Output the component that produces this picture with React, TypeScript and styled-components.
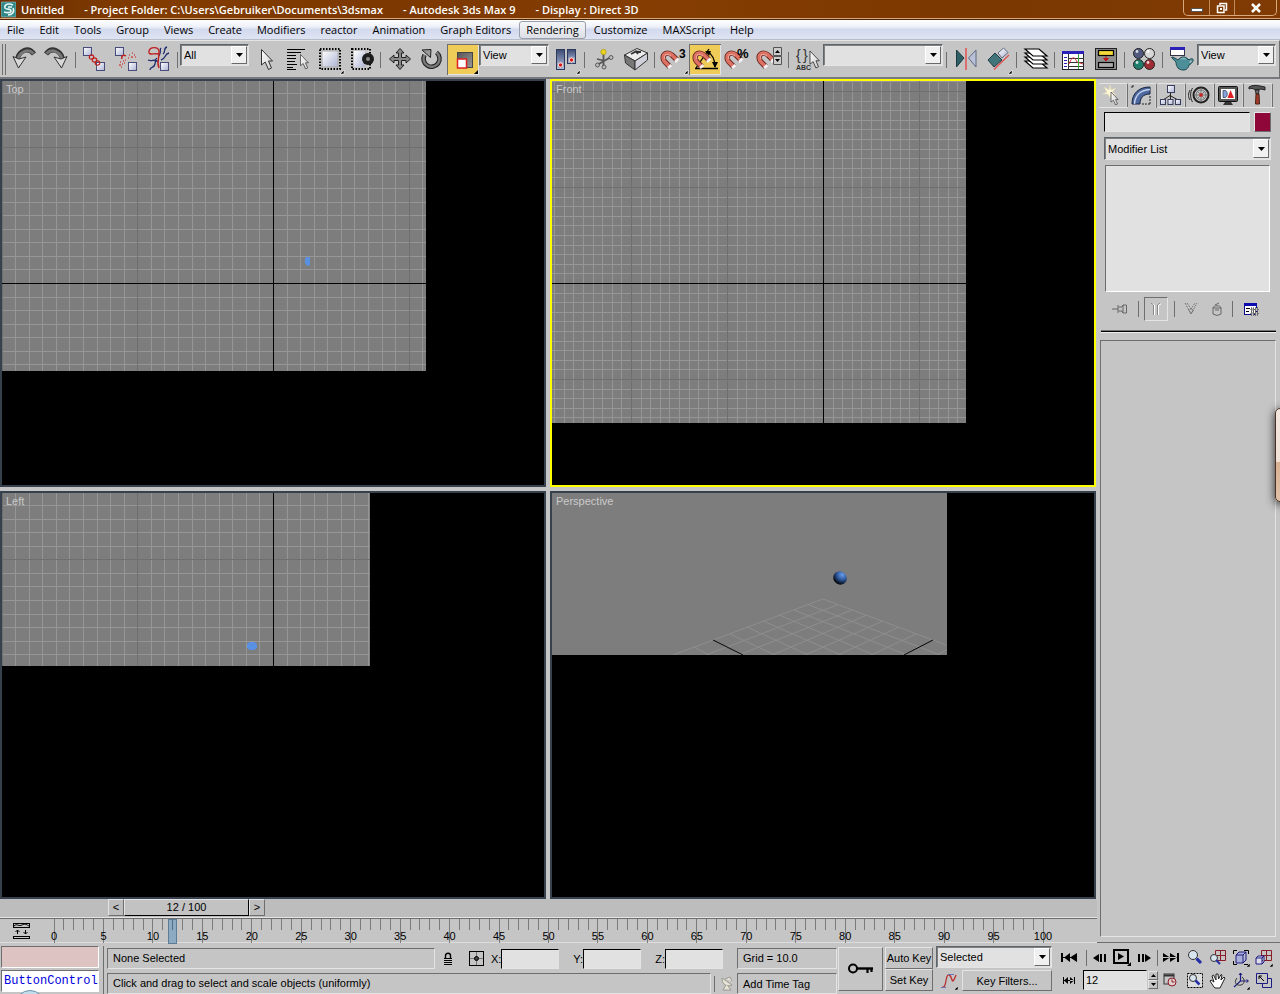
import React from "react";
import styled, { createGlobalStyle, css } from "styled-components";

const c = {
  face: "#c5c5c5",
  light: "#e4e4e4",
  dark: "#6e6e6e",
  field: "#e1e1e1",
  frame: "#37404d",
  view: "#7d7d7d",
};
const uiFont = `"Liberation Sans", Arial, sans-serif`;
const chromeFont = `"Open Sans", "Noto Sans", sans-serif`;

const GlobalStyle = createGlobalStyle`
  *, *::before, *::after { box-sizing: border-box; }
  html, body { margin: 0; background: ${c.face}; }
  body { font: 11px/14px ${uiFont}; color: #000; }
  button, input, select { font: inherit; color: inherit; margin: 0; border-radius: 0; }
  button { padding: 0; border: 0; background: none; }
  svg { display: block; }
`;

const sunken = css`
  border: 1px solid;
  border-color: ${c.dark} ${c.light} ${c.light} ${c.dark};
`;
const raised = css`
  border: 1px solid;
  border-color: ${c.light} ${c.dark} ${c.dark} ${c.light};
`;

const AppShell = styled.div`
  position: relative;
  display: flex;
  flex-direction: column;
  min-height: 100vh;
  overflow: hidden;
  background: ${c.face};
`;

/* ---------- title bar ---------- */
const TitleBar = styled.header`
  display: flex;
  align-items: flex-start;
  height: 20px;
  padding-left: 1px;
  background: linear-gradient(90deg, #6d3000, #833c00 12%, #7c3800 30%, #853d02 50%, #7b3800 75%, #7f3b03);
  border-bottom: 1px solid #4b2405;
  box-shadow: inset 0 -1px 0 #d9a77c;
  color: #fff;
`;
const TitleText = styled.h1`
  display: flex;
  flex: 1;
  gap: 20px;
  margin: 0 0 0 5px;
  font: 600 11px/20px ${chromeFont};
  white-space: nowrap;
`;
const WindowButtons = styled.div`
  display: flex;
  margin-right: 3px;
  border: 1px solid #d9a77c;
  border-top: 0;
  border-radius: 0 0 5px 5px;
  overflow: hidden;
`;
const WindowButton = styled.button<{ $w: number }>`
  width: ${(p) => p.$w}px;
  height: 15px;
  display: grid;
  place-items: center;
  & + & { border-left: 1px solid #c08a5c; }
`;

/* ---------- menu ---------- */
const MenuBar = styled.nav`
  display: flex;
  gap: 1px;
  height: 20px;
  background: linear-gradient(#fff, #eef1fa 35%, #d3daee 50%, #dfe4f3);
  border-bottom: 1px solid #b8bcc8;
`;
const MenuItem = styled.button<{ $active?: boolean }>`
  padding: 0 6px;
  border: 1px solid transparent;
  border-radius: 3px;
  font: 11px/16px ${chromeFont};
  height: 18px;
  margin-top: 1px;
  ${(p) => p.$active && css`
    border-color: #9a9ea8;
    background: linear-gradient(#f4f5f8, #dcdfe6);
  `}
`;

/* ---------- toolbar ---------- */
const Toolbar = styled.div`
  display: flex;
  align-items: flex-start;
  height: 39px;
  padding: 3px 0 0 2px;
  border-top: 1px solid ${c.light};
  border-bottom: 2px solid #77797c;
  border-right: 1px solid ${c.dark};
`;
const Grip = styled.span`
  width: 4px;
  height: 31px;
  margin-right: 2px;
  border: solid ${c.dark};
  border-width: 0 1px;
`;
const ToolButton = styled.button<{ $on?: boolean }>`
  flex: none;
  width: 32px;
  height: 31px;
  ${(p) => p.$on && css`
    background: #efcb58;
    box-shadow: inset 1px 1px 0 ${c.dark}, inset -1px -1px 0 ${c.light};
  `}
`;
const Divider = styled.span<{ $h?: number }>`
  flex: none;
  width: 6px;
  height: ${(p) => p.$h ?? 16}px;
  margin-top: ${(p) => (p.$h ? 0 : 8)}px;
  background: linear-gradient(${c.dark}, ${c.dark}) 3px 0 / 1px 100% no-repeat;
`;

/* ---------- form parts ---------- */
const SelectBox = styled.div<{ $w?: number; $h?: number }>`
  position: relative;
  flex: none;
  width: ${(p) => (p.$w ? `${p.$w}px` : "auto")};
  height: ${(p) => p.$h ?? 22}px;
  background: ${c.field};
  border: 1px solid;
  border-color: #5f6468 ${c.light} ${c.light} #5f6468;
  box-shadow: inset 1px 1px 0 #7d8184;
`;
const SelectInput = styled.select`
  appearance: none;
  display: block;
  width: 100%;
  height: 100%;
  padding: 0 18px 0 3px;
  border: 0;
  outline: 0;
  background: transparent;
`;
const SelectArrow = styled.span`
  position: absolute;
  top: 1px;
  right: 1px;
  bottom: 1px;
  width: 16px;
  display: grid;
  place-items: center;
  pointer-events: none;
  background: #f0f0f0;
  border: 1px solid;
  border-color: #fff #696969 #696969 #fff;
`;
function Select({ label, value, w, h }: { label: string; value: string; w?: number; h?: number }) {
  return (
    <SelectBox $w={w} $h={h}>
      <SelectInput aria-label={label} defaultValue={value}>
        <option value={value}>{value}</option>
      </SelectInput>
      <SelectArrow>
        <svg width="7" height="4"><path d="M0 0H7L3.5 4Z" /></svg>
      </SelectArrow>
    </SelectBox>
  );
}
const TextInput = styled.input<{ $w?: number }>`
  width: ${(p) => (p.$w ? `${p.$w}px` : "100%")};
  min-width: 0;
  height: 20px;
  padding: 0 2px;
  background: ${c.field};
  border: 1px solid;
  border-color: #000 ${c.light} ${c.light} #000;
  outline: 0;
`;

/* ---------- work area ---------- */
const Main = styled.main`
  display: flex;
  flex: 1;
`;
const Stage = styled.section`
  display: flex;
  flex: 1;
  flex-direction: column;
  min-width: 0;
`;
const Viewports = styled.div`
  display: grid;
  flex: 1;
  grid-template: 1fr 1fr / 1fr 1fr;
  gap: 4px;
  margin-right: 1px;
`;
const Viewport = styled.div<{ $active?: boolean }>`
  position: relative;
  min-width: 0;
  overflow: hidden;
  background: #000;
  border: 2px solid ${(p) => (p.$active ? "#ffff00" : c.frame)};
`;
const ViewLabel = styled.span`
  position: absolute;
  top: 1px;
  left: 4px;
  color: #cacaca;
`;

function GridView(p: { w: number; h: number; cx: number; cy: number; step: number; children?: React.ReactNode }) {
  const lines: React.ReactNode[] = [];
  for (let pass = 0; pass < 2; pass++) {
    for (let i = -45; i <= 45; i++) {
      if (i === 0 || (i % 10 === 0) !== (pass === 1)) continue;
      const x = Math.round(p.cx + i * p.step);
      const y = Math.round(p.cy + i * p.step);
      const fill = pass ? "#6f6f6f" : "#969696";
      if (x >= 0 && x < p.w) lines.push(<rect key={`x${i}`} x={x} y="0" width="1" height={p.h} fill={fill} />);
      if (y >= 0 && y < p.h) lines.push(<rect key={`y${i}`} x="0" y={y} width={p.w} height="1" fill={fill} />);
    }
  }
  return (
    <svg width={p.w} height={p.h} shapeRendering="crispEdges">
      <rect width={p.w} height={p.h} fill={c.view} />
      {lines}
      <rect x={p.cx} width="1" height={p.h} />
      <rect y={p.cy} width={p.w} height="1" />
      {p.children}
    </svg>
  );
}

function PerspectiveView() {
  const edge = [[0, 106], [14, 112], [29, 117], [44, 122], [60, 128], [76, 134], [93, 141], [110, 147], [129, 154]];
  return (
    <svg width="395" height="162">
      <defs>
        <radialGradient id="ball" cx=".5" cy=".2" r=".75">
          <stop offset="0" stopColor="#6a9dea" /><stop offset=".5" stopColor="#2f589c" /><stop offset="1" stopColor="#05070c" />
        </radialGradient>
      </defs>
      <rect width="395" height="162" fill={c.view} />
      <g stroke="#8e8e8e" fill="none">
        {edge.map(([x, y], i) => (
          <path key={i} d={`M${271 + x} ${y}L${121 + 33 * i} 162M${271 - x} ${y}L${421 - 33 * i} 162`} />
        ))}
      </g>
      <path d="M161 147L191 162M381 147L352 162" stroke="#000" />
      <ellipse cx="288" cy="85" rx="7" ry="6.5" fill="url(#ball)" transform="rotate(35 288 85)" />
    </svg>
  );
}

/* ---------- time slider and track bar ---------- */
const SliderRow = styled.div`
  display: flex;
  height: 18px;
  padding-left: 108px;
  background: #bdbdbd;
`;
const SliderArrow = styled.button`
  width: 16px;
  height: 17px;
  ${raised}
  line-height: 15px;
`;
const SliderThumb = styled.button`
  width: 125px;
  height: 17px;
  border: 1px solid;
  border-color: ${c.light} #000 #000 ${c.light};
  background: #c2c2c2;
  line-height: 15px;
`;
const TrackBar = styled.div`
  display: flex;
  height: 26px;
  border-top: 1px solid ${c.light};
  box-shadow: inset 0 1px 0 ${c.dark}, inset 0 -1px 0 #ddd;
`;
const TrackToggle = styled.button`
  width: 54px;
  padding: 0 0 0 12px;
`;
const Ruler = styled.svg`
  flex: 1;
  height: 25px;
  margin-right: 54px;
  overflow: visible;
  font: 11px ${uiFont};
`;
function TimeRuler() {
  const frames = Array.from({ length: 101 }, (_, i) => i);
  return (
    <Ruler shapeRendering="crispEdges">
      {frames.map((f) => (
        <line key={f} x1={`${f}%`} x2={`${f}%`} y1="1" y2={f % 5 ? 12 : 25} stroke="#7b7b7b" />
      ))}
      <svg x="12%" overflow="visible">
        <rect x="-4" y="1" width="8" height="24" fill="#8cabc3" stroke="#5c7d97" />
        <line y1="1" y2="12" stroke="#50708a" />
      </svg>
      {frames.filter((f) => f % 5 === 0).map((f) => (
        <text key={f} x={`${f}%`} y="22" textAnchor="middle">{f}</text>
      ))}
    </Ruler>
  );
}

/* ---------- command panel ---------- */
const Panel = styled.aside`
  display: flex;
  flex-direction: column;
  width: 183px;
  padding: 4px 9px 0 2px;
  border-bottom: 1px solid ${c.dark};
`;
const Tabs = styled.div`
  display: flex;
  margin-right: -4px;
  border-bottom: 1px solid ${c.light};
`;
const Tab = styled.button<{ $on?: boolean }>`
  width: 29px;
  height: 24px;
  padding: 0 0 4px 2px;
  border-right: 1px solid ${c.dark};
  border-top: 1px solid ${c.light};
  border-radius: 2px 2px 0 0;
  box-shadow: inset -1px 0 0 #d4d4d4;
  ${(p) => p.$on && css`margin-bottom: -1px; background: ${c.face}; height: 25px;`}
`;
const PanelBody = styled.div`
  display: flex;
  flex-direction: column;
  gap: 5px;
  padding: 4px 0 0 5px;
`;
const NameRow = styled.div`
  display: flex;
  gap: 4px;
`;
const Swatch = styled.button`
  flex: none;
  width: 17px;
  height: 20px;
  background: #8f0638;
  ${raised}
`;
const StackList = styled.div`
  height: 127px;
  margin: 0 1px;
  background: ${c.field};
  border: 1px solid;
  border-color: ${c.dark} #fff #fff ${c.dark};
`;
const StackTools = styled.div`
  display: flex;
  align-items: center;
  height: 24px;
`;
const StackButton = styled.button<{ $on?: boolean; $w: number }>`
  width: ${(p) => p.$w}px;
  height: 24px;
  display: grid;
  place-items: center;
  ${(p) => p.$on && css`margin: 0 3px; ${sunken}`}
`;
const Rule = styled.hr`
  height: 3px;
  margin: 9px -5px 0 2px;
  border: 0;
  border-top: 1px solid #777;
  border-bottom: 1px solid #eee;
  background: #000;
`;
const Rollout = styled.div`
  flex: 1;
  margin: 7px -5px 5px 1px;
  ${sunken}
`;

/* ---------- status bar ---------- */
const StatusBar = styled.footer`
  display: flex;
  height: 51px;
  padding-top: 3px;
`;
const Listener = styled.div`
  display: flex;
  flex-direction: column;
  gap: 2px;
  width: 104px;
  padding: 0 4px 0 1px;
  border-right: 1px solid ${c.dark};
  margin-right: 3px;
`;
const ListenerInput = styled.input<{ $pink?: boolean }>`
  width: 98px;
  height: 22px;
  padding: 0 0 0 2px;
  border: 1px solid;
  border-color: ${c.dark} #fff #fff ${c.dark};
  background: ${(p) => (p.$pink ? "#dec3c3" : "#fff")};
  color: #0000e0;
  font: 12px "Liberation Mono", monospace;
`;
const StatusColumn = styled.div`
  display: flex;
  flex: 1;
  flex-direction: column;
  gap: 4px;
  padding-top: 2px;
  min-width: 0;
`;
const TagColumn = styled(StatusColumn)`
  flex: none;
  width: 101px;
  padding-right: 1px;
`;
const StatusRow = styled.div`
  display: flex;
  align-items: center;
`;
const StatusField = styled.output`
  flex: 1;
  height: 21px;
  padding: 0 5px;
  overflow: hidden;
  line-height: 19px;
  white-space: nowrap;
  ${sunken}
`;
const TagButton = styled.button`
  height: 21px;
  padding: 0 5px;
  text-align: left;
  ${sunken}
`;
const IconButton = styled.button<{ $w: number; $h?: number }>`
  flex: none;
  display: grid;
  place-items: center;
  width: ${(p) => p.$w}px;
  height: ${(p) => p.$h ?? 21}px;
`;
const Coord = styled.label`
  display: flex;
  align-items: center;
  justify-content: flex-end;
  width: 82px;
  padding-right: 14px;
`;
const PushButton = styled.button<{ $w?: number; $h?: number }>`
  width: ${(p) => (p.$w ? `${p.$w}px` : "auto")};
  height: ${(p) => p.$h ?? 22}px;
  display: grid;
  place-items: center;
  white-space: nowrap;
  ${raised}
`;
const KeyColumn = styled.div`
  display: flex;
  flex-direction: column;
  padding-top: 1px;
  & + & { margin-left: 2px; }
`;
const FilterColumn = styled.div`
  display: flex;
  flex-direction: column;
  gap: 2px;
  width: 116px;
  margin: 0 3px;
`;
const Transport = styled.div`
  width: 128px;
`;
const FrameInput = styled(TextInput)`
  height: 20px;
`;
const Spinner = styled.span`
  display: flex;
  flex-direction: column;
  margin-left: 1px;
`;
const SpinButton = styled.button`
  display: grid;
  place-items: center;
  width: 10px;
  height: 9px;
  ${raised}
`;
const NavGrid = styled.div`
  display: grid;
  grid-template-columns: repeat(4, 23px);
  grid-auto-rows: 23px;
  margin-right: 5px;
`;

/* ---------- overlays from the desktop ---------- */
const SideGadget = styled.div`
  position: absolute;
  top: 408px;
  right: -8px;
  width: 13px;
  height: 94px;
  border: 1px solid #4a3026;
  border-radius: 5px;
  background: linear-gradient(#f3e6de, #f0e0d5 57%, #d9b292 58%, #dfc0a8);
  box-shadow: 0 2px 10px #222;
`;
const StartOrb = styled.div`
  position: absolute;
  left: 15px;
  bottom: -26px;
  width: 30px;
  height: 30px;
  border: 1px solid #6d92ac;
  border-radius: 50%;
  background: #c3dcea;
`;

/* ---------- icons ---------- */
const Flyout = () => <path d="M31 28V32H27Z" fill="#000" stroke="#fff" strokeWidth=".6" />;
const Cursor = ({ x = 0, y = 0, s = 1 }) => (
  <path transform={`translate(${x} ${y}) scale(${s})`} d="M0 0V15.5L3.7 12.5L7 20L10 18.5L7 11.5H11Z" fill="url(#paper)" stroke="#333" />
);
const Magnet = () => (
  <g fill="none">
    <path d="M13 25L8 20C3 14 9 8 15 13L20 18" stroke="#6b2a22" strokeWidth="5.5" />
    <path d="M13 25L8 20C3 14 9 8 15 13L20 18" stroke="#dd7264" strokeWidth="3.6" />
    <path d="M8 17C6 13 10 11 14 14" stroke="#f4b6a8" />
    <path d="M11 26L14.500 23M18 20L21.500 16.500" stroke="#f2f2f2" strokeWidth="2.500" />
  </g>
);
const Square = ({ x, y }: { x: number; y: number }) => (
  <rect x={x + 0.5} y={y + 0.5} width="8" height="8" fill="url(#blue)" stroke="#474d78" />
);

const icons: Record<string, React.ReactNode> = {
  undo: (
    <g>
      <path d="M9.500 17C11 9 20 4 26 12" fill="none" stroke="#333" strokeWidth="5" />
      <path d="M10 17C11.500 10 20 6 25.500 11.500" fill="none" stroke="#777" strokeWidth="3" />
      <path d="M5 14.500L10.500 26L18 15L11 17Z" fill="#d8d8d8" stroke="#333" />
    </g>
  ),
  link: (
    <g>
      <Square x={5} y={5} /><Square x={18} y={20} />
      <g fill="none" stroke="#c02020" strokeWidth="1.2"><circle cx="13.500" cy="15" r="2.200" /><circle cx="16.500" cy="18" r="2.200" /><circle cx="19.500" cy="21" r="2.200" /></g>
    </g>
  ),
  unlink: (
    <g>
      <Square x={5} y={5} /><Square x={18} y={20} />
      <path d="M12 17C11 14 13 12 16 14" fill="none" stroke="#c02020" strokeWidth="1.5" />
      <path d="M19 13h1M22 11h1M21 15h2M24 13h1M18 16h1M25 15h1M10 20h1M13 19h1M12 22h1M9 23h2M14 21h1M11 25h1M15 18h1" stroke="#cf4a4a" strokeWidth="1.3" />
    </g>
  ),
  bind: (
    <g fill="none">
      <g stroke="#1f2f70" strokeWidth="1.3">
        <path d="M6 18C10 20 13 16 16 20M8 28C8 24 12 27 13 22C14 19 12 18 15 16M25 5C21 6 24 10 21 12M27 11C22 12 24 17 19 18M17 14C20 9 17 8 19 6" />
      </g>
      <path d="M17 26C14 19 18 16 17 9C16 4 8 5 7 9C6 14 11 11 17 12" stroke="#c02020" strokeWidth="1.4" />
      <Square x={18} y={20} />
    </g>
  ),
  cursor: <Cursor x={12.5} y={7.5} />,
  byname: (
    <g>
      <path d="M6 7.500H24M6 10.500H20M6 13.500H15M6 16.500H15M6 19.500H14M6 22.500H16M6 25.500H12M6 27.500H15" stroke="#000" strokeWidth="1.2" />
      <Cursor x={19.5} y={12.5} s={0.72} />
    </g>
  ),
  region: (
    <g>
      <rect x="9" y="9" width="16" height="16" fill="url(#blue)" stroke="#aaa" />
      <rect x="7" y="7" width="20" height="20" fill="none" stroke="#000" strokeWidth="2" strokeDasharray="1.5 1.5" />
      <Flyout />
    </g>
  ),
  crossing: (
    <g>
      <rect x="9" y="9" width="11" height="16" fill="url(#blue)" />
      <rect x="7" y="7" width="18" height="20" fill="none" stroke="#000" strokeWidth="2" strokeDasharray="1.5 1.5" />
      <circle cx="23" cy="17" r="6" fill="#1c1c1c" /><circle cx="23" cy="17" r="2" fill="#888" />
    </g>
  ),
  move: <path d="M17 6.500L21 11H18.500V15.500H23V13L27.500 17L23 21V18.500H18.500V23H21L17 27.500L13 23H15.500V18.500H11V21L6.500 17L11 13V15.500H15.500V11H13Z" fill="#888" stroke="#222" />,
  rotate: (
    <g fill="none">
      <path d="M21.500 10.500A8 8 0 1 1 9.500 13" stroke="#222" strokeWidth="4.600" />
      <path d="M21.500 10.500A8 8 0 1 1 9.500 13" stroke="#7a7a7a" strokeWidth="2.400" />
      <path d="M7 8L16 7.500L15.500 15.500L12 12.500Z" fill="#999" stroke="#222" />
    </g>
  ),
  scale: (
    <g>
      <rect x="10.500" y="10.500" width="15" height="15" fill="url(#dark)" stroke="#444" />
      <rect x="10.500" y="17" width="9" height="9" fill="#fff" stroke="#e02020" strokeWidth="1.5" />
      <path d="M31 28V32H27Z" />
    </g>
  ),
  pivot: (
    <g>
      <rect x="7.500" y="7.500" width="8" height="20" fill="url(#navy)" stroke="#2c3a60" />
      <rect x="18.500" y="7.500" width="8" height="14" fill="url(#navy)" stroke="#2c3a60" />
      <g fill="#fff" stroke="#99a"><circle cx="11.500" cy="23" r="3" /><circle cx="22.500" cy="18" r="3" /></g>
      <circle cx="11.500" cy="23" r="1.800" fill="#e01818" /><circle cx="22.500" cy="18" r="1.800" fill="#e01818" />
      <Flyout />
    </g>
  ),
  manip: (
    <g>
      <path d="M16.500 10V25M10 23L24 15M10 17L18 19" stroke="#555" strokeWidth="1.800" />
      <g fill="#bbb" stroke="#444" strokeWidth=".8"><circle cx="10.500" cy="23" r="2" /><circle cx="24" cy="15.500" r="2" /><circle cx="17" cy="25" r="2" /></g>
      <circle cx="16.500" cy="10" r="2.700" fill="#e9d21c" stroke="#a8920c" strokeWidth=".6" />
    </g>
  ),
  keyboard: (
    <g stroke="#333">
      <path d="M5.500 13L18 6.500L28.500 11L16 19Z" fill="#ececec" />
      <path d="M5.500 13L16 19V28L6.500 21Z" fill="#777" />
      <path d="M16 19L28.500 11V18L16 28Z" fill="#cfd0da" />
      <path d="M12 12L17 9.500L19 12M16 9.500L22 10" fill="none" strokeWidth="1.800" />
    </g>
  ),
  snap: <g><Magnet /><text x="22" y="16" fontSize="12" fontWeight="700">3</text><Flyout /></g>,
  angle: (
    <g>
      <path d="M6 26.500H29M7 26L20 7M18 9C23 12 26 18 26 25" fill="none" stroke="#000" strokeWidth="1.3" />
      <path d="M16 9L22 9L20 14ZM23 20H29L26 26Z" />
      <Magnet />
    </g>
  ),
  percent: <g><Magnet /><text x="16" y="16" fontSize="13" fontWeight="700">%</text></g>,
  spinner: (
    <g>
      <Magnet />
      <path d="M20.500 5.500H28.500V13.500H20.500ZM20.500 14.500H28.500V22.500H20.500Z" fill="#ccc" stroke="#555" />
      <path d="M22 11L24.500 8L27 11ZM22 17L24.500 20L27 17Z" />
    </g>
  ),
  named: (
    <g fill="#333">
      <text x="5" y="18" fontSize="14">{"{"}</text>
      <text x="12" y="18" fontSize="14">{"}"}</text>
      <text x="5" y="28" fontSize="7" fontWeight="700">ABC</text>
      <Cursor x={19} y={9} s={0.85} />
    </g>
  ),
  mirror: (
    <g>
      <path d="M7.500 8L15 16L7.500 25Z" fill="#2c6066" stroke="#1d3b40" />
      <path d="M27 8L19.500 16L27 25Z" fill="#b9c1d8" stroke="#5f6a80" />
      <path d="M17 6V28" stroke="#e05050" strokeWidth="1.5" />
    </g>
  ),
  align: (
    <g>
      <path d="M7 18L14 11L21 18L13 25Z" fill="#41757b" stroke="#1d3b40" />
      <path d="M17 11L22.500 6L27 10.500L21 16Z" fill="url(#blue)" stroke="#5f6a80" />
      <path d="M13 27.500L28 13" stroke="#e05050" strokeWidth="1.3" />
      <Flyout />
    </g>
  ),
  layers: (
    <g fill="#fff" stroke="#000" strokeWidth="1.2">
      {[19, 15, 11, 7].map((y) => <path key={y} d={`M6 ${y}H20L28 ${y + 7}H14Z`} />)}
    </g>
  ),
  curve: (
    <g>
      <rect x="5.500" y="9.500" width="21" height="18" fill="#fff" stroke="#223" />
      <path d="M5 9H27V12H5Z" fill="#2a22b8" />
      <path d="M11.500 12V27M11 16.500H27M11 20.500H27M11 24.500H27" stroke="#333" />
      <path d="M7 15.500H10M7 18.500H10M7 21.500H10M7 24.500H10" stroke="#2a22b8" />
      <path d="M12 22C16 12 18 16 20 20L26 22" fill="none" stroke="#d03030" /><path d="M21.500 12V27" stroke="#3a3" />
    </g>
  ),
  schematic: (
    <g>
      <rect x="6.500" y="6.500" width="21" height="21" fill="#8f8f8f" stroke="#222" />
      <rect x="9.500" y="8.500" width="15" height="5" fill="#f2d838" stroke="#000" strokeWidth="1.2" />
      <rect x="9.500" y="20.500" width="15" height="5" fill="#aaa" stroke="#000" strokeWidth="1.2" />
      <path d="M17 14V17M14.500 16.500H19.500L17 19Z" fill="#c01818" stroke="#c01818" />
    </g>
  ),
  material: (
    <g>
      {([["#51597f", 11.5, 11.5], ["#d8d8d8", 22.5, 11.5], ["#1f7d6c", 11.5, 22.5], ["#a02c34", 22.5, 22.5]] as [string, number, number][]).map(([f, x, y]) => (
        <g key={f}><circle cx={x} cy={y} r="5" fill={f} stroke="#222" /><circle cx={x - 1.5} cy={y - 2} r="1.4" fill="#fff" opacity=".8" /></g>
      ))}
    </g>
  ),
  render: (
    <g>
      <rect x="5.500" y="5.500" width="14" height="8" fill="#fff" stroke="#334" /><path d="M5 5H20V8H5Z" fill="#2a22b8" />
      <path d="M11 20L6.500 15.500L8 15L13 18C15 15 22 15 24 18C29 14 30 20 24 23C23 27 21 28 18 28C14 28 11 25 11 20Z" fill="#4c8f99" stroke="#1d474e" />
      <path d="M24.500 19C27 17.500 27.500 19.500 25 21" fill={c.face} /><path d="M14 17.500C16 14 21 14 22.500 17.500" fill="#7bb4bc" stroke="#1d474e" />
    </g>
  ),
};

function Defs() {
  return (
    <svg width="0" height="0" style={{ position: "absolute" }} aria-hidden>
      <defs>
        <linearGradient id="blue" x2="1" y2="1"><stop offset="0" stopColor="#fff" /><stop offset="1" stopColor="#aeb4d4" /></linearGradient>
        <linearGradient id="paper" x2="1" y2="1"><stop offset="0" stopColor="#fff" /><stop offset="1" stopColor="#ccc" /></linearGradient>
        <linearGradient id="dark" x2="1" y2="1"><stop offset="0" stopColor="#555" /><stop offset="1" stopColor="#999" /></linearGradient>
        <linearGradient id="navy" x2="0" y2="1"><stop offset="0" stopColor="#3c4a72" /><stop offset="1" stopColor="#b8c4e4" /></linearGradient>
      </defs>
    </svg>
  );
}
const Glyph = ({ name, flip }: { name: string; flip?: boolean }) => (
  <svg width="32" height="31" viewBox="0 2 32 31" fontFamily="Liberation Sans, sans-serif">
    <g transform={flip ? "translate(32 0) scale(-1 1)" : undefined}>{icons[name]}</g>
  </svg>
);
const Tool = ({ name, label, on, flip }: { name: string; label: string; on?: boolean; flip?: boolean }) => (
  <ToolButton aria-label={label} $on={on}><Glyph name={name} flip={flip} /></ToolButton>
);

const tabIcons: [string, React.ReactNode][] = [
  ["Create", <g><path d="M9 1L10 6L15 4L11 8L15 11L10 10L9 14L7 10L2 10L6 8L3 3L8 6Z" fill="#fff8d8" stroke="#e6dcae" strokeWidth=".5" /><Cursor x={10} y={8} s={0.65} /></g>],
  ["Modify", <g><path d="M2 20C2 9 9 3 20 3V10C13 10 10 14 10 20Z" fill="#4e68a0" stroke="#16213c" /><path d="M4.500 20C5 11 11 6 20 5.500" stroke="#c4d2f0" strokeWidth="1.5" fill="none" /><path d="M2 2H5M2 2V5M20 12V20M12 20H20" stroke="#222" strokeDasharray="2 1" /></g>],
  ["Hierarchy", <g stroke="#3a3f60" fill="url(#blue)"><path d="M11.500 8V12M4 16L11 11.500L19 16M11.500 12V16" fill="none" stroke="#222" /><rect x="8.500" y="1.500" width="7" height="7" /><rect x="1.500" y="15.500" width="5" height="5" /><rect x="9" y="15.500" width="5" height="5" /><rect x="16.500" y="15.500" width="5" height="5" /></g>],
  ["Motion", <g fill="none" stroke="#222"><circle cx="13" cy="11" r="7.500" strokeWidth="2" /><circle cx="13" cy="11" r="5" stroke="#777" /><path d="M13 5V17M7 11H19M9 7L17 15M17 7L9 15" stroke="#777" /><circle cx="13" cy="11" r="1.300" fill="#c22" stroke="#c22" /><path d="M4.500 4C2 8 2 14 4.500 18M2 6C0 10 0 13 2 16" /></g>],
  ["Display", <g><rect x="1.500" y="2.500" width="19" height="15" rx="1" fill="#555" stroke="#111" /><rect x="4" y="5" width="14" height="10" fill="#fff" /><path d="M6 6.500H8C11 6.500 11 13.500 8 13.500H6Z" fill="#88a0dc" stroke="#234" strokeWidth=".7" /><path d="M10.500 14L13.500 6L17 14Z" fill="#e02020" /><path d="M8 18H14L16 21H6Z" fill="#333" /></g>],
  ["Utilities", <g><path d="M3 3C6 1 11 1 14 2L19 3V6L15 5C12 6 10 5 9 6C7 4 5 4 3 5Z" fill="#555" stroke="#222" /><path d="M9.500 6H13L12.500 10H10Z" fill="#777" stroke="#222" /><path d="M10 10H13L13.500 20H9.500Z" fill="#a83a2a" stroke="#421" /></g>],
];

const mini = (w: number, h: number, child: React.ReactNode) => <svg width={w} height={h}>{child}</svg>;
const lens = (x: number, y: number, r: number) => (
  <g><circle cx={x} cy={y} r={r} fill="#d8e4ee" stroke="#333" /><path d={`M${x + r - 1} ${y + r - 1}l4 4`} stroke="#2430a8" strokeWidth="2.5" /></g>
);
const corner = <path d="M18 14V18H14Z" fill="#000" stroke="#fff" strokeWidth=".5" />;
const navIcons: [string, React.ReactNode][] = [
  ["Zoom", <g>{lens(7, 6, 4.5)}<path d="M11 10L15 14" stroke="#2430a8" strokeWidth="3" /></g>],
  ["Zoom All", <g><path d="M6.500 1.500H16.500V11.500H6.500ZM11.500 1V12M6 6.500H17" fill="none" stroke="#8a1c28" /><circle cx="5" cy="9" r="3.500" fill="#d8e4ee" stroke="#333" /><path d="M7 11L11 15" stroke="#2430a8" strokeWidth="2" /></g>],
  ["Zoom Extents", <g><path d="M1.500 5V1.500H5M12 1.500H16.500V5M1.500 12V15.500H5M12 15.500H16" fill="none" stroke="#000" /><path d="M4 6H11V14H4ZM4 6L7 3H14L11 6M14 3V11L11 14" fill="#aab0d8" stroke="#1c1c80" />{corner}</g>],
  ["Zoom Extents All", <g><path d="M6.500 1.500H16.500V11.500H6.500ZM11.500 1V12M6 6.500H17" fill="none" stroke="#8a1c28" /><path d="M1 9H7V15H1ZM1 9L3 7H9L7 9M9 7V13L7 15" fill="#dde" stroke="#1c1c80" />{corner}</g>],
  ["Region Zoom", <g><rect x="1.500" y="1.500" width="15" height="14" fill="#ddd" stroke="#000" strokeDasharray="2 1" />{lens(7, 6, 3.5)}</g>],
  ["Pan", <path d="M5 15L1 9L2 8L5 10L3 4L4.500 3L7 8L7 2H9L9.500 7L12 2.500L13 3L12 8L15 5L16 6L13 12L11 16H6Z" fill="#fff" stroke="#222" />],
  ["Arc Rotate", <g fill="none"><path d="M8.500 1V9L2 15M8.500 9H16" stroke="#1c1c80" strokeWidth="1.2" /><path d="M7 3L8.500 1L10 3M14.500 7.500L16.500 9L14.500 10.500" stroke="#1c1c80" /><path d="M5 6C1 11 5 14 9 13C13 12 13 7 10 5" stroke="#333" />{corner}</g>],
  ["Maximize Viewport", <g fill="none" stroke="#1c1c80"><path d="M1.500 1.500H12.500V11.500H1.500Z" /><path d="M12 6.500H16.500V15.500H7.500V12" /><path d="M4 4L9 9M4 7V4H7" stroke="#000" /></g>],
];

const menus = ["File", "Edit", "Tools", "Group", "Views", "Create", "Modifiers", "reactor", "Animation", "Graph Editors", "Rendering", "Customize", "MAXScript", "Help"];

export default function App() {
  return (
    <AppShell>
      <GlobalStyle />
      <Defs />
      <TitleBar>
        {mini(15, 18, <g><rect y="2" width="15" height="15" rx="1" fill="#2f8788" stroke="#9fd0cf" strokeWidth=".6" /><path d="M12 5C8 3 3 4 4 8C5 10 10 8 10 11C10 13 6 13 3 12M12 8C14 12 11 15 7 15M7 7H11" fill="none" stroke="#e7f6f4" strokeWidth="1.6" /></g>)}
        <TitleText>
          <span>Untitled</span>
          <span>- Project Folder: C:\Users\Gebruiker\Documents\3dsmax</span>
          <span>- Autodesk 3ds Max 9</span>
          <span>- Display : Direct 3D</span>
        </TitleText>
        <WindowButtons>
          <WindowButton $w={25} aria-label="Minimize">{mini(12, 12, <rect x=".5" y="6.5" width="11" height="3" fill="#fff" stroke="#555" />)}</WindowButton>
          <WindowButton $w={25} aria-label="Restore">{mini(12, 12, <g fill="none" stroke="#fff" strokeWidth="1.5"><path d="M4 3V1.500H10.500V8H9" /><rect x="1.500" y="4" width="6.500" height="6.500" /><rect x="4" y="6" width="2" height="2" stroke="none" fill="#fff" /></g>)}</WindowButton>
          <WindowButton $w={42} aria-label="Close">{mini(12, 12, <path d="M2 2L10 10M10 2L2 10" stroke="#fff" strokeWidth="2.5" />)}</WindowButton>
        </WindowButtons>
      </TitleBar>
      <MenuBar>
        {menus.map((m) => <MenuItem key={m} $active={m === "Rendering"}>{m}</MenuItem>)}
      </MenuBar>
      <Toolbar>
        <Grip />
        <Tool name="undo" label="Undo" /><Tool name="undo" label="Redo" flip /><Divider />
        <Tool name="link" label="Link" /><Tool name="unlink" label="Unlink" /><Tool name="bind" label="Bind to Space Warp" /><Divider />
        <Select label="Selection filter" value="All" w={69} />
        <Tool name="cursor" label="Select" /><Tool name="byname" label="Select by Name" />
        <Tool name="region" label="Selection Region" /><Tool name="crossing" label="Window Crossing" /><Divider />
        <Tool name="move" label="Move" /><Tool name="rotate" label="Rotate" /><Tool name="scale" label="Scale" on />
        <Select label="Coordinate system" value="View" w={70} />
        <Tool name="pivot" label="Pivot" /><Divider />
        <Tool name="manip" label="Manipulate" /><Tool name="keyboard" label="Keyboard Override" /><Divider />
        <Tool name="snap" label="Snaps" /><Tool name="angle" label="Angle Snap" on /><Tool name="percent" label="Percent Snap" /><Tool name="spinner" label="Spinner Snap" /><Divider />
        <Tool name="named" label="Edit Selection Sets" />
        <Select label="Selection set" value="" w={120} /><Divider />
        <Tool name="mirror" label="Mirror" /><Tool name="align" label="Align" /><Divider />
        <Tool name="layers" label="Layers" /><Divider />
        <Tool name="curve" label="Curve Editor" /><Tool name="schematic" label="Schematic View" /><Divider />
        <Tool name="material" label="Material Editor" /><Divider />
        <Tool name="render" label="Render Scene" />
        <Select label="Render type" value="View" w={79} />
      </Toolbar>

      <Main>
        <Stage>
          <Viewports>
            <Viewport>
              <GridView w={424} h={290} cx={271} cy={202} step={13.57}>
                <path d="M303 177L304 176H307L308 177V183L306 185H305L303 183Z" fill="#5a90e2" />
              </GridView>
              <ViewLabel>Top</ViewLabel>
            </Viewport>
            <Viewport $active>
              <GridView w={414} h={342} cx={271} cy={202} step={9.6} />
              <ViewLabel>Front</ViewLabel>
            </Viewport>
            <Viewport>
              <GridView w={368} h={173} cx={271} cy={202} step={13.57}>
                <path d="M247 149H252L255 152V154L252 157H248L245 155V151Z" fill="#5a90e2" />
              </GridView>
              <ViewLabel>Left</ViewLabel>
            </Viewport>
            <Viewport>
              <PerspectiveView />
              <ViewLabel>Perspective</ViewLabel>
            </Viewport>
          </Viewports>
          <SliderRow>
            <SliderArrow aria-label="Previous frame">&lt;</SliderArrow>
            <SliderThumb>12 / 100</SliderThumb>
            <SliderArrow aria-label="Next frame">&gt;</SliderArrow>
          </SliderRow>
          <TrackBar>
            <TrackToggle aria-label="Mini Curve Editor">
              {mini(20, 18, <g fill="none" stroke="#000"><rect x="1.500" y="1.500" width="16" height="4" /><path d="M2 4C5 1 7 5 10 3S15 3 17 4M5.500 8V12M3.500 10L5.500 8L7.500 10M13.500 8V12M11.500 10L13.500 12L15.500 10" /><rect x="1.500" y="14.500" width="16" height="2" /></g>)}
            </TrackToggle>
            <TimeRuler />
          </TrackBar>
        </Stage>
        <Panel>
          <Tabs>
            {tabIcons.map(([n, i]) => <Tab key={n} aria-label={n} $on={n === "Modify"}><svg width="24" height="21">{i}</svg></Tab>)}
          </Tabs>
          <PanelBody>
            <NameRow><TextInput aria-label="Object name" /><Swatch aria-label="Object color" /></NameRow>
            <Select label="Modifier" value="Modifier List" h={23} />
            <StackList />
            <StackTools>
              <StackButton $w={31} aria-label="Pin Stack">{mini(18, 12, <path d="M1 6H7M7 2V10M7.500 4H11L12 2H15.500V10H12L11 8H7.500M12 2V10" fill="none" stroke="#666" />)}</StackButton>
              <Divider $h={16} />
              <StackButton $w={24} $on aria-label="Show End Result">{mini(12, 14, <g fill="none"><path d="M2 2L4.500 3V13M11 2L8.500 3V13" stroke="#fff" /><path d="M1 1L3.500 3V13M10 1L7.500 3V13" stroke="#888" /></g>)}</StackButton>
              <Divider $h={16} />
              <StackButton $w={28} aria-label="Make Unique">{mini(15, 14, <g fill="none" stroke="#777"><path d="M1 1L7 12L13 1M3 1L7 7L11 1" strokeDasharray="2 1" /><path d="M5 8.500L7 6.500L9.500 8.500L7 11.500Z" /></g>)}</StackButton>
              <StackButton $w={24} aria-label="Remove Modifier">{mini(12, 14, <path d="M2 6H10V12L6 13.500L2 12ZM2 6C2 3 10 3 10 6M4 3L8 1M4 8H8" fill="none" stroke="#666" />)}</StackButton>
              <Divider $h={16} />
              <StackButton $w={32} aria-label="Configure">{mini(17, 15, <g><rect x="1.500" y="1.500" width="12" height="11" fill="#fff" stroke="#0b0b90" /><path d="M1 1H14V4H1Z" fill="#0b0bb0" /><path d="M3 6.500H7M3 9.500H6" stroke="#000" /><path d="M8 6H11V9H8ZM12 6H15V9H12ZM8 10H11V13H8ZM12 10H15V13H12Z" fill="#bbb" stroke="#222" strokeDasharray="1 1" /></g>)}</StackButton>
            </StackTools>
          </PanelBody>
          <Rule />
          <Rollout />
        </Panel>
      </Main>

      <StatusBar>
        <Listener>
          <ListenerInput $pink aria-label="Macro recorder" />
          <ListenerInput aria-label="Script listener" defaultValue="ButtonControl" />
        </Listener>
        <StatusColumn>
          <StatusRow>
            <StatusField>None Selected</StatusField>
            <IconButton $w={26} aria-label="Lock selection">{mini(10, 13, <g><path d="M2.500 6V3.500C2.500 .5 7.500 .5 7.500 3.500V6" fill="none" stroke="#000" strokeWidth="1.4" /><path d="M1 6.500H9M1 8.500H9M1 10.500H9M1 12.500H9" stroke="#000" strokeWidth="1.2" /></g>)}</IconButton>
            <IconButton $w={30} aria-label="Absolute mode">{mini(15, 15, <g fill="none" stroke="#000"><rect x=".5" y=".5" width="14" height="14" /><path d="M1 7.500H14M7.500 1V14" stroke="#777" /><circle cx="7.500" cy="7.500" r="2" fill="#444" /></g>)}</IconButton>
            {["X", "Y", "Z"].map((a) => <Coord key={a}>{a}:<TextInput $w={58} /></Coord>)}
          </StatusRow>
          <StatusRow>
            <StatusField>Click and drag to select and scale objects (uniformly)</StatusField>
            <Divider $h={16} />
            <IconButton $w={20} aria-label="Communication Center">{mini(15, 15, <g fill="#e6e4d8" stroke="#8d8b80" strokeWidth=".8"><path d="M2 2C2 9 7 11 12 9Z" /><path d="M5 3L10 1L12 5M6 9L3 14H11L8 10" /></g>)}</IconButton>
          </StatusRow>
        </StatusColumn>
        <TagColumn>
          <StatusField>Grid = 10.0</StatusField>
          <TagButton>Add Time Tag</TagButton>
        </TagColumn>
        <KeyColumn>
          <PushButton $w={45} $h={44} aria-label="Set Keys">
            {mini(26, 14, <g fill="none" stroke="#000"><circle cx="5" cy="6.500" r="4" strokeWidth="2" /><path d="M9 6.500H25" strokeWidth="2.4" /><path d="M19.500 7V11M23.500 7V10" strokeWidth="2.2" /></g>)}
          </PushButton>
        </KeyColumn>
        <KeyColumn>
          <PushButton $w={48}>Auto Key</PushButton>
          <PushButton $w={48}>Set Key</PushButton>
        </KeyColumn>
        <FilterColumn>
          <Select label="Key set" value="Selected" h={22} />
          <StatusRow>
            <IconButton $w={26} aria-label="Tangents">{mini(18, 18, <g fill="none"><path d="M2 15C7 17 5 2 9 3S11 16 16 3" stroke="#b83030" strokeWidth="1.3" /><path d="M1 15.500H6M8 2.500H14" stroke="#6a74b8" />{corner}</g>)}</IconButton>
            <PushButton $w={90} $h={21}>Key Filters...</PushButton>
          </StatusRow>
        </FilterColumn>
        <Transport>
          <StatusRow>
            <IconButton $w={28} $h={23} aria-label="Go to Start">{mini(17, 9, <path d="M0 0H2V9H0ZM9 0V9L3 4.500ZM16 0V9L9 4.500ZM2 4H16V5H2Z" />)}</IconButton>
            <Divider $h={16} />
            <IconButton $w={21} $h={23} aria-label="Previous Frame">{mini(13, 8, <path d="M6 0V8L0 4ZM7 0H9V8H7ZM11 0H13V8H11Z" />)}</IconButton>
            <IconButton $w={24} $h={23} aria-label="Play">{mini(18, 17, <g><rect x="1" y="1" width="14" height="13" fill="none" stroke="#000" strokeWidth="2" /><path d="M5 4L11 7.500L5 11ZM18 13V17H14Z" /></g>)}</IconButton>
            <IconButton $w={20} $h={23} aria-label="Next Frame">{mini(13, 8, <path d="M7 0V8L13 4ZM0 0H2V8H0ZM4 0H6V8H4Z" />)}</IconButton>
            <Divider $h={16} />
            <IconButton $w={22} $h={23} aria-label="Go to End">{mini(17, 9, <path d="M14 0H16V9H14ZM0 0V9L7 4.500ZM7 0V9L14 4.500ZM0 4H15V5H0Z" />)}</IconButton>
          </StatusRow>
          <StatusRow>
            <IconButton $w={28} $h={22} aria-label="Key Mode">{mini(12, 7, <path d="M0 0H1V7H0ZM5 0V7L1 3.500ZM7 0V7L11 3.500ZM11 0H12V7H11ZM1 3H11V4H1Z" />)}</IconButton>
            <FrameInput $w={64} aria-label="Current frame" defaultValue="12" />
            <Spinner>
              <SpinButton aria-label="Increase">{mini(5, 3, <path d="M0 3H5L2.500 0Z" />)}</SpinButton>
              <SpinButton aria-label="Decrease">{mini(5, 3, <path d="M0 0H5L2.500 3Z" />)}</SpinButton>
            </Spinner>
            <IconButton $w={24} $h={22} aria-label="Time Configuration">{mini(14, 14, <g fill="none"><rect x="1" y="1" width="10" height="10" stroke="#333" /><path d="M1 2.500H11" stroke="#333" strokeWidth="2" /><circle cx="9" cy="9" r="4" fill="#e4cfcf" stroke="#8a1c28" /><path d="M9 6.500V9H11.500" stroke="#8a1c28" /></g>)}</IconButton>
          </StatusRow>
        </Transport>
        <NavGrid>
          {navIcons.map(([n, i]) => <IconButton key={n} $w={23} $h={23} aria-label={n}>{mini(18, 18, i)}</IconButton>)}
        </NavGrid>
      </StatusBar>
      <SideGadget />
      <StartOrb />
    </AppShell>
  );
}
